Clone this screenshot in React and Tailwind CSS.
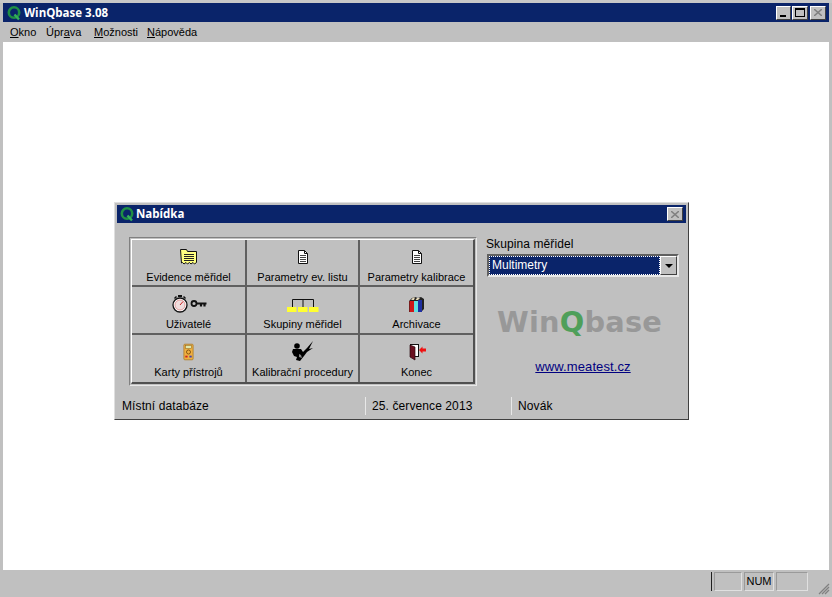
import React from 'react';

const QLogo = ({ className }) => (
    <svg viewBox="0 0 16 16" className={className}>
        <circle cx="8" cy="7.500" r="5.200" fill="none" stroke="#1f8f45" strokeWidth="2.600" />
        <path d="M8.500 9.500l4.500 5" stroke="#35b05a" strokeWidth="2.400" />
    </svg>
);

const FolderIcon = () => (
    <svg viewBox="0 0 17 16" className="w-[17px] h-[16px]">
        <path d="M.5.500h6l1 2h9v11l-2 1.500-1.500-1.500-2 1.500-1.500-1.500-2 1.500-1.500-1.500-2 1.500-1.500-1.500-1 .5z" fill="#ffff80" stroke="#111" />
        <path d="M4 5.500h10M4 7.500h10M4 9.500h10M4 11.500h10" stroke="#222" />
    </svg>
);

const DocIcon = () => (
    <svg viewBox="0 0 12 14" className="w-[12px] h-[14px]">
        <path d="M1.500.5h6l3 3v10h-9z" fill="#fff" stroke="#111" />
        <path d="M7.500.5v3h3" fill="none" stroke="#111" />
        <path d="M3 5.500h6M3 7.500h6M3 9.500h6M3 11.500h6" stroke="#444" />
    </svg>
);

const WatchKeyIcon = () => (
    <svg viewBox="0 0 36 18" className="w-[36px] h-[18px]">
        <path d="M3.500 3.500l2-2M14.500 3.500l-2-2" stroke="#111" strokeWidth="1.500" />
        <rect x="7" y="0" width="4" height="2" fill="#111" />
        <circle cx="9" cy="10" r="7" fill="#fff" stroke="#111" strokeWidth="1.300" />
        <circle cx="9" cy="10" r="5" fill="#f0dede" stroke="#d88" strokeWidth="0.800" />
        <path d="M9 10l3-3.500" stroke="#c22" />
        <circle cx="23" cy="8.500" r="2.500" fill="none" stroke="#111" strokeWidth="1.800" />
        <path d="M25.500 8.500h10M30 8.500v3M33.500 8.500v3" stroke="#111" strokeWidth="2.200" />
    </svg>
);

const GroupIcon = () => (
    <svg viewBox="0 0 32 17" className="w-[32px] h-[17px]">
        <path d="M5.500 11V3.500h21V11M16 3.500V11" fill="none" stroke="#111" />
        <rect x="0" y="11" width="9.500" height="5" fill="#ffff30" />
        <rect x="11" y="11" width="9.500" height="5" fill="#ffff30" />
        <rect x="22" y="11" width="9.500" height="5" fill="#ffff30" />
    </svg>
);

const BooksIcon = () => (
    <svg viewBox="0 0 17 17" className="w-[17px] h-[17px]">
        <path d="M1 5l3-3 3-1 3 1 3-1 3 2v10l-3 3H1z" fill="#222" />
        <rect x="1.500" y="5" width="4.500" height="11" fill="#d01818" />
        <rect x="6" y="5" width="4" height="11" fill="#60e0e0" />
        <rect x="10" y="4" width="4" height="12" fill="#2030a0" />
        <path d="M3 4l2-2.500h2L6 4zM7.500 4l1.500-2h3l-2 2z" fill="#e4d8b8" />
    </svg>
);

const MeterIcon = () => (
    <svg viewBox="0 0 12 18" className="w-[11px] h-[18px]">
        <rect x="1" y="0.500" width="10" height="17" rx="1" fill="#f0b040" stroke="#b08030" />
        <rect x="3" y="2" width="6" height="3" fill="#dfe8b0" stroke="#806020" strokeWidth="0.500" />
        <circle cx="6" cy="9" r="2.200" fill="none" stroke="#805010" />
        <rect x="2.500" y="13" width="2.500" height="2" fill="#d02020" />
        <rect x="7" y="13" width="2.500" height="2" fill="#4040b0" />
    </svg>
);

const CalibIcon = () => (
    <svg viewBox="0 0 22 22" className="w-[24px] h-[22px]">
        <circle cx="5" cy="5" r="2.800" fill="#000" />
        <path d="M1 8h8l2 3 4-4 6-7-4 8 4-1-6 4-3 4-4 5-4-1 1-3-3-1-2-4z" fill="#000" />
        <path d="M7 13l2 1 1 3-3-1z" fill="#888" />
    </svg>
);

const DoorIcon = () => (
    <svg viewBox="0 0 20 18" className="w-[20px] h-[18px]">
        <rect x="3.500" y="1.500" width="8" height="12" fill="#fff" stroke="#111" />
        <path d="M3 2l5 2v13l-5-3z" fill="#6a1020" stroke="#2a0810" strokeWidth="0.700" />
        <path d="M12 7l3.500-3.500v2h3.500v3h-3.500v2z" fill="#f01010" />
    </svg>
);

const CloseBtn = ({ className }) => (
    <div className={`w-[16px] h-[14px] bg-[#c0c0c0] border border-t-white border-l-white border-r-[#404040] border-b-[#404040] flex items-center justify-center text-[#808080] ${className}`}>
        <svg viewBox="0 0 8 7" className="w-[8px] h-[7px]"><path d="M0 0l8 7M8 0L0 7" stroke="currentColor" strokeWidth="1.500" /></svg>
    </div>
);

const menuItems = [
    { before: '', key: 'O', after: 'kno', cls: 'w-[36px]' },
    { before: 'Úpr', key: 'a', after: 'va', cls: 'w-[48px]' },
    { before: '', key: 'M', after: 'ožnosti', cls: 'w-[53px]' },
    { before: '', key: 'N', after: 'ápověda', cls: 'w-[60px]' },
];

const tiles = [
    { label: 'Evidence měřidel', icon: <FolderIcon /> },
    { label: 'Parametry ev. listu', icon: <DocIcon /> },
    { label: 'Parametry kalibrace', icon: <DocIcon /> },
    { label: 'Uživatelé', icon: <WatchKeyIcon /> },
    { label: 'Skupiny měřidel', icon: <GroupIcon /> },
    { label: 'Archivace', icon: <BooksIcon /> },
    { label: 'Karty přístrojů', icon: <MeterIcon /> },
    { label: 'Kalibrační procedury', icon: <CalibIcon /> },
    { label: 'Konec', icon: <DoorIcon /> },
];

export default function App() {
    return (
        <div className="relative w-[832px] h-[597px] flex flex-col bg-[#c0c0c0] font-['Liberation_Sans',sans-serif] text-[11px] text-black overflow-hidden border-t-[3px] border-[#c8c8c8]">
            {/* main title */}
            <div className="h-[19px] mx-[3px] shrink-0 bg-[#0a246a] flex items-center pl-[3px] pr-[3px]">
                <QLogo className="w-[16px] h-[16px] mr-[2px]" />
                <span className="font-['Open_Sans',sans-serif] font-bold text-[11.500px] text-white">WinQbase 3.08</span>
                <div className="ml-auto flex">
                    <div className="w-[15px] h-[14px] bg-[#c0c0c0] border border-t-white border-l-white border-r-[#404040] border-b-[#404040] relative">
                        <div className="absolute left-[3px] bottom-[2px] w-[6px] h-[2px] bg-black" />
                    </div>
                    <div className="w-[16px] h-[14px] ml-px bg-[#c0c0c0] border border-t-white border-l-white border-r-[#404040] border-b-[#404040] flex items-center justify-center">
                        <div className="w-[10px] h-[9px] border border-t-2 border-black" />
                    </div>
                    <CloseBtn className="ml-[2px]" />
                </div>
            </div>

            {/* menu */}
            <div className="h-[20px] mx-[3px] shrink-0 flex items-center pl-[7px] text-[11px]">
                {menuItems.map((m) => (
                    <span key={m.key} className={m.cls}>
                        {m.before}<span className="underline">{m.key}</span>{m.after}
                    </span>
                ))}
            </div>

            <div className="flex-1 mx-[3px] bg-white" />

            {/* status bar */}
            <div className="h-[27px] shrink-0 flex items-start pt-[2px] pr-[24px] text-[11px] justify-end">
                <div className="w-px h-[19px] bg-[#202020] mr-[2px]" />
                <div className="w-[28px] h-[19px] border border-[#9a9a9a] border-b-[#e0e0e0] border-r-[#e0e0e0] mr-[2px]" />
                <div className="w-[30px] h-[19px] border border-[#9a9a9a] border-b-[#e0e0e0] border-r-[#e0e0e0] mr-[2px] flex items-center justify-center">NUM</div>
                <div className="w-[32px] h-[19px] border border-[#9a9a9a] border-b-[#e0e0e0] border-r-[#e0e0e0]" />
            </div>
            <svg viewBox="0 0 12 12" className="absolute right-[2px] bottom-[2px] w-[12px] h-[12px]">
                <path d="M11 1L1 11M11 4L4 11M11 7L7 11" stroke="#808080" strokeWidth="1.300" />
            </svg>

            {/* Nabídka window */}
            <div className="absolute left-[114px] top-[199px] w-[575px] h-[218px] bg-[#c0c0c0] border border-t-[#dfdfdf] border-l-[#dfdfdf] border-r-[#404040] border-b-[#404040] p-[2px] flex flex-col">
                <div className="h-[18px] shrink-0 bg-[#0a246a] flex items-center pl-[2px] pr-[3px]">
                    <QLogo className="w-[16px] h-[16px] mr-px" />
                    <span className="font-['Open_Sans',sans-serif] font-bold text-[11.500px] text-white">Nabídka</span>
                    <CloseBtn className="ml-auto" />
                </div>

                <div className="flex-1 flex pl-[12px] pt-[14px]">
                    <div className="w-[348px] h-[149px] border border-t-[#808080] border-l-[#808080] border-r-[#e8e8e8] border-b-[#e8e8e8] p-px shrink-0">
                        <div className="grid grid-cols-[115px_113px_1fr] grid-rows-3 w-full h-full gap-0 border-t border-l border-white border-r-2 border-b-2 border-r-[#505050] border-b-[#505050]">
                            {tiles.map((t) => (
                                <div key={t.label} className="flex flex-col items-center border-r-2 border-b-2 border-[#606060] last:border-0 [&:nth-child(3n)]:border-r-0 [&:nth-child(n+7)]:border-b-0">
                                    <div className="h-[29px] flex items-center justify-center pt-[5px]">{t.icon}</div>
                                    <span className="mt-[1px] leading-[14px] whitespace-nowrap">{t.label}</span>
                                </div>
                            ))}
                        </div>
                    </div>

                    <div className="ml-[8px] w-[195px] flex flex-col">
                        <span className="text-[12px] leading-[14px] ml-px tracking-[0.1px]">Skupina měřidel</span>
                        <div className="mt-[3px] ml-[2px] w-[192px] h-[23px] bg-white border-2 border-t-[#606060] border-l-[#606060] border-r-[#e8e8e8] border-b-[#e8e8e8] flex">
                            <div className="flex-1 bg-[#0a246a] text-white pl-[2px] text-[12px] leading-[17px] border border-dotted border-white">Multimetry</div>
                            <div className="w-[17px] bg-[#c0c0c0] border border-t-white border-l-white border-r-[#404040] border-b-[#404040] flex items-center justify-center">
                                <div className="w-0 h-0 border-l-[4px] border-r-[4px] border-t-[4px] border-l-transparent border-r-transparent border-t-black" />
                            </div>
                        </div>
                        <div className="mt-[25px] ml-[12px] font-['DejaVu_Sans',sans-serif] font-bold text-[28.800px] leading-[40px] tracking-[0.2px] text-[#989898] whitespace-nowrap">
                            Win<span className="text-[#4f9f5a]">Q</span>base
                        </div>
                        <a className="mt-[18px] text-center underline text-[#000080] text-[13px] leading-[14px] tracking-[0.1px] pl-[1px]">www.meatest.cz</a>
                    </div>
                </div>

                {/* dialog status */}
                <div className="h-[22px] shrink-0 flex items-center text-[12px] tracking-[0.1px] pb-px">
                    <span className="w-[248px] pl-[5px]">Místní databáze</span>
                    <span className="w-[146px] pl-[6px] border-l border-[#e8e8e8]">25. července 2013</span>
                    <span className="pl-[6px] border-l border-[#e8e8e8]">Novák</span>
                </div>
            </div>
        </div>
    );
}
